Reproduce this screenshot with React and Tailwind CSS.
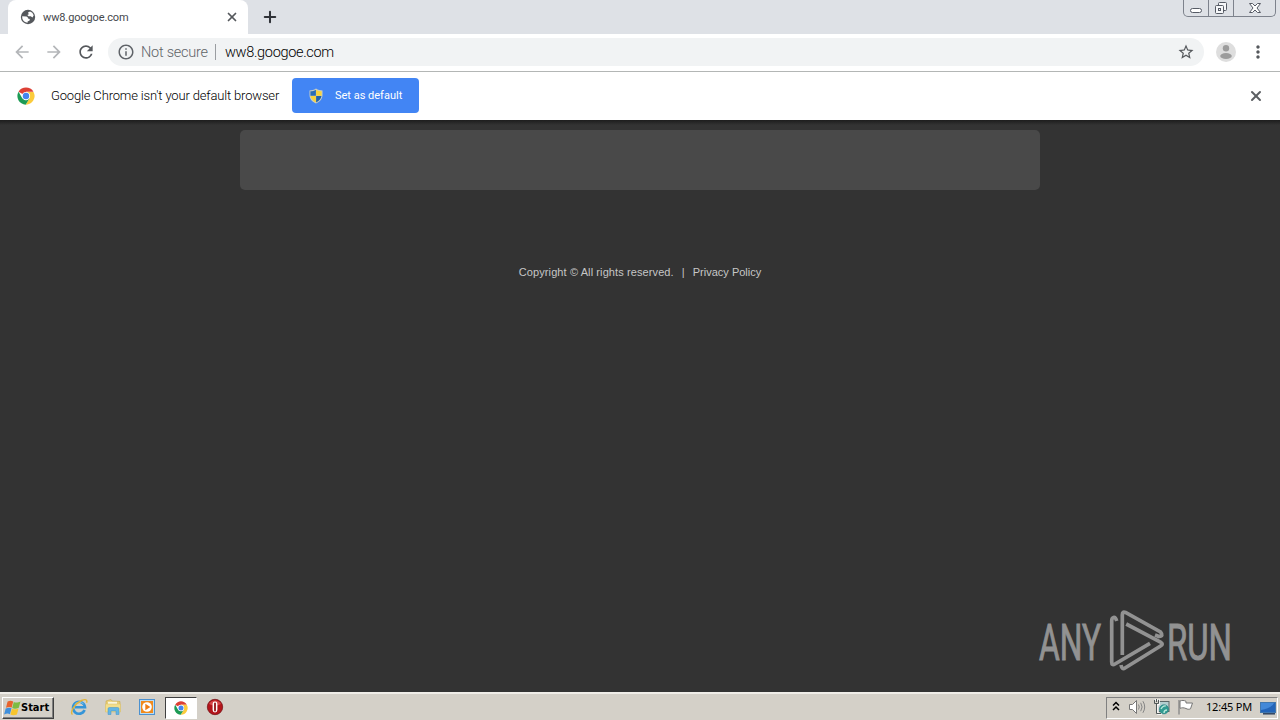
import { X, Plus } from "lucide-react";
import {
  MdArrowBack,
  MdArrowForward,
  MdInfoOutline,
  MdMoreVert,
  MdRefresh,
  MdStarBorder,
} from "react-icons/md";

const GlobeIcon = () => (
  <svg viewBox="0 0 16 16" className="h-4 w-4">
    <circle cx="8" cy="8" r="7.200" fill="#55585c" />
    <path d="M2.200 7.200 6.500 7.600q1.600.4 1.500 2l1.800.3-.2 1.500-2 1.200v1.200Q3.500 13.300 2.300 9.500Z" fill="#fff" />
    <path d="M8 3.600 10 2.500q2.800.9 3.700 3.700L12.500 8.500 10.700 7.300H8.500L7.300 6l1.500-.8Z" fill="#fff" />
  </svg>
);

const ChromeLogo = ({ className }) => (
  <svg viewBox="0 0 48 48" className={className}>
    <circle cx="24" cy="24" r="23" fill="#fff" />
    <path d="M24 24 4.100 12.500A23 23 0 0 1 43.900 12.500H24Z" fill="#dd4035" />
    <path d="M24 13H44A23 23 0 0 1 23 47L34 29Z" fill="#fbcb3c" />
    <path d="M4.100 12.500 14 30 24 35.500 34 29 23 47A23 23 0 0 1 4.100 12.500Z" fill="#1d9b55" />
    <circle cx="24" cy="24" r="11" fill="#fff" />
    <circle cx="24" cy="24" r="8.600" fill="#4485ee" />
  </svg>
);

const ShieldIcon = () => (
  <svg viewBox="0 0 16 16" className="h-4 w-4">
    <path d="M8 .5C6 2 3.500 2.400 1.500 2.400V7c0 4 2.800 7 6.500 8.500C11.700 14 14.500 11 14.500 7V2.400C12.500 2.400 10 2 8 .5Z" fill="#c9cfc4" />
    <path d="M7.900 1.800v6H2.400V3.300C4.600 3.300 6 3 7.900 1.800Z" fill="#2a6db5" />
    <path d="M8.100 1.800v6h5.500V3.300C11.400 3.300 10 3 8.100 1.800Z" fill="#f7d33c" />
    <path d="M2.500 8h5.400v6.500C5 13 3 11 2.500 8Z" fill="#f7d33c" />
    <path d="M13.500 8H8.100v6.500C11 13 13 11 13.500 8Z" fill="#2362a8" />
  </svg>
);

const WindowsFlag = () => (
  <svg viewBox="0 0 17 16" className="h-4 w-[17px] shrink-0">
    <path d="M3.600 1.500C6 .2 7.500.5 9.200 1.500L7.700 7.500C5.800 6.800 4.500 6.700 2 7.800Z" fill="#e8632c" />
    <path d="M9.800 1.900C11.600 2.900 13.500 2.900 16.500 1.500L14.800 7.700C12.300 8.900 10 8.900 8.200 8Z" fill="#7dbb42" />
    <path d="M1.700 8.600C4.200 7.500 5.800 7.500 7.500 8.200L5.900 14.200C4.300 13.300 2.600 13.300.1 14.500Z" fill="#3f8fdc" />
    <path d="M8 8.700C9.800 9.600 11.900 9.600 14.500 8.500L12.900 14.500C10.500 15.600 8.200 15.500 6.400 14.600Z" fill="#f8c52c" />
  </svg>
);

const ExplorerIcon = () => (
  <svg viewBox="0 0 18 18" className="h-[18px] w-[18px]">
    <path d="M14.600 12A6 6 0 1 1 15 9.200H5" fill="none" stroke="#3595d8" strokeWidth="2.600" />
    <path d="M4.500 6.800A6 6 0 0 1 13.500 5.800" fill="none" stroke="#7cc8f4" strokeWidth="1" />
    <path d="M2.500 16.500C-.5 14 5 5.500 11.500 2.500 15.500.8 17.600 1.500 16.600 4.800" fill="none" stroke="#e3b53a" strokeWidth="1.400" />
  </svg>
);

const FolderIcon = () => (
  <svg viewBox="0 0 18 18" className="h-[18px] w-[18px]">
    <path d="M2 3 7 1.500l1 1.500 8 .5v10H2Z" fill="#e9cf78" stroke="#c9a94e" strokeWidth=".6" />
    <path d="M4 3.800h9v3H4Z" fill="#fbf6dc" />
    <path d="M1.500 6h15V14h-15Z" fill="#f3de8c" stroke="#d7bd66" strokeWidth=".5" />
    <path d="M4 16.500v-5.500c0-1 .5-1.500 1.500-1.500h8c1 0 1.500.5 1.500 1.500v5.500h-3v-3.500h-5v3.500Z" fill="#64b5e4" stroke="#4192c6" strokeWidth=".5" />
  </svg>
);

const MediaIcon = () => (
  <svg viewBox="0 0 18 18" className="h-[18px] w-[18px]">
    <rect x="1.500" y="1.500" width="15" height="15" fill="#b9dcf5" stroke="#4b91d0" />
    <rect x="3" y="3" width="12" height="12" fill="#f08a1d" />
    <circle cx="9" cy="9" r="4.800" fill="#fff" />
    <path d="M7.300 5.700v6.600L12.400 9Z" fill="#ee7d16" />
  </svg>
);

const OperaIcon = () => (
  <svg viewBox="0 0 18 18" className="h-[18px] w-[18px]">
    <circle cx="9" cy="9" r="7.700" fill="#b3151b" stroke="#6e0d11" strokeWidth=".7" />
    <path d="M3 6A7 7 0 0 1 15 6Q9 9 3 6Z" fill="#d6484b" />
    <rect x="6.600" y="3.500" width="4.800" height="11" rx="2.400" fill="#fff" />
    <rect x="8.100" y="4.500" width="1.800" height="9" rx=".9" fill="#8f1015" />
  </svg>
);

const SpeakerIcon = () => (
  <svg viewBox="0 0 18 16" className="h-4 w-[18px]" fill="none">
    <path d="M1.500 5.500h3L8.500 1.500v13L4.500 10.500h-3Z" fill="#fff" stroke="#777" />
    <path d="M10.500 5.500q1.500 2.500 0 5M12.700 3.800q2.800 4.200 0 8.400M14.900 2.200q3.600 5.800 0 11.600" stroke="#858585" />
  </svg>
);

const NetworkIcon = () => (
  <svg viewBox="0 0 17 16" className="h-4 w-[17px]">
    <rect x="5.500" y="2.500" width="10.500" height="10" fill="#b5cfd0" stroke="#5c6868" />
    <path d="M1 1h5v4.500H5v9.500h4" fill="none" stroke="#fff" strokeWidth="1.500" />
    <path d="M1.500.8V4.500h4V.8M3.500 0v3M3.500 4.500v10H8" fill="none" stroke="#505757" />
    <circle cx="11" cy="10.300" r="4.600" fill="#319b91" stroke="#267e81" strokeWidth=".6" />
    <path d="M8 10q2-4 5-3M11 14q0-3 3-3" fill="none" stroke="#b9e7da" strokeWidth="1.300" />
  </svg>
);

const FlagIcon = () => (
  <svg viewBox="0 0 17 16" className="h-4 w-[17px]">
    <path d="M2 1v14.500" stroke="#8a8a8a" strokeWidth="1.400" />
    <path d="M3 2c2-.8 4-.8 6 .3v1.700h6.500l-2 5.800c-1.500.7-3 .6-4.500-.3C6.500 8.500 5 8.600 3 9.300Z" fill="#fff" stroke="#777" />
  </svg>
);

const DesktopIcon = () => (
  <svg viewBox="0 0 16 14" className="h-[14px] w-4">
    <rect x=".5" y="1.500" width="15" height="10" fill="#2364b8" stroke="#4177ae" />
    <path d="M1 2h13Q12 7 1 9Z" fill="#4288d8" />
    <path d="M3 12.800h12" stroke="#243a59" strokeWidth="1.400" />
  </svg>
);

const TabStrip = () => (
  <div className="relative flex h-[34px] bg-[#dee1e6]">
    <div className="ml-2 flex h-full w-60 items-center rounded-t-lg bg-white pl-3">
      <GlobeIcon />
      <span className="ml-[7px] w-[182px] whitespace-nowrap pt-[2px] text-[11px] font-normal tracking-[-0.12px] text-[#45484c]">
        ww8.googoe.com
      </span>
      <X className="h-3.5 w-3.5 text-[#55585c]" strokeWidth={3} />
    </div>
    <div className="flex w-11 items-center justify-center">
      <Plus className="h-[18px] w-[18px] text-[#303338]" strokeWidth={2.7} />
    </div>
    {/* Window controls */}
    <div className="absolute right-[4px] top-0 flex h-[17px] w-[93px] rounded-b-[5px] border border-t-0 border-[#7d828c]">
      <div className="flex w-[25px] items-end justify-center border-r border-[#7d828c] pb-[3px]">
        <div className="h-[5px] w-3 rounded-sm border border-[#565b65] bg-white" />
      </div>
      <div className="flex w-[25px] items-center justify-center border-r border-[#7d828c]">
        <svg viewBox="0 0 14 14" className="h-[14px] w-[14px]" fill="#f6f7f9" stroke="#565b65">
          <rect x="4.500" y="1.500" width="8" height="8" rx="1" />
          <rect x="1.500" y="4.500" width="8" height="8" rx="1" />
          <rect x="4.500" y="7.500" width="2" height="2" />
        </svg>
      </div>
      <div className="flex flex-1 items-center justify-center">
        <svg viewBox="0 0 12 10" className="h-[10px] w-3">
          <path d="M.5.500h3L6 3 8.500.500h3L8 5l3.500 4.500h-3L6 7 3.500 9.500h-3L4 5Z" fill="#fff" stroke="#565b65" />
        </svg>
      </div>
    </div>
  </div>
);

const Toolbar = () => (
  <div className="flex h-[38px] items-center border-b border-[#b3b6b5] bg-white pb-px pl-3">
    <MdArrowBack className="h-5 w-5 text-[#b4b6b9]" />
    <MdArrowForward className="ml-3 h-5 w-5 text-[#b4b6b9]" />
    <MdRefresh className="ml-3 h-5 w-5 text-[#55585c]" />
    <div className="ml-3 flex h-7 w-[1096px] items-center rounded-full bg-[#f1f3f4] pl-[9px]">
      <MdInfoOutline className="h-[18px] w-[18px] text-[#5f6368]" />
      <span className="ml-[6px] w-[74px] whitespace-nowrap pt-px text-[14.5px] tracking-[-0.25px] text-[#5f6368]">
        Not secure
      </span>
      <div className="h-4 w-px bg-[#9a9da1]" />
      <span className="ml-[9px] flex-1 whitespace-nowrap pt-px text-[14.5px] tracking-[-0.32px] text-black">
        ww8.googoe.com
      </span>
      <MdStarBorder className="mr-[9px] h-[18px] w-[18px] text-[#55585c]" />
    </div>
    <div className="ml-3 h-5 w-5">
      <svg viewBox="0 0 20 20" className="h-5 w-5">
        <circle cx="10" cy="10" r="10" fill="#dedede" />
        <circle cx="10" cy="6.300" r="3.200" fill="#9c9c9c" />
        <ellipse cx="10" cy="14" rx="5.800" ry="3" fill="#9c9c9c" />
      </svg>
    </div>
    <MdMoreVert className="ml-3 h-5 w-5 text-[#55585c]" />
  </div>
);

const InfoBar = () => (
  <div className="flex h-12 items-center bg-white pb-px pl-[17px]">
    <ChromeLogo className="h-[18px] w-[18px]" />
    <span className="ml-4 w-[241px] whitespace-nowrap text-[13px] tracking-[-0.16px] text-black">
      Google Chrome isn't your default browser
    </span>
    <button className="flex h-[35px] w-[127px] items-center rounded bg-[#4285f4] pl-4 text-white">
      <ShieldIcon />
      <span className="ml-[11px] whitespace-nowrap pt-[2px] text-[11px] font-normal">Set as default</span>
    </button>
    <X className="ml-auto mr-4 h-4 w-4 text-[#5c5f63]" strokeWidth={3} />
  </div>
);

const AnyRunLogo = () => (
  <svg
    viewBox="0 0 206 64"
    className="absolute bottom-[19px] right-[36px] h-16 w-[206px] overflow-visible font-normal"
    fill="none"
    stroke="#929292"
  >
    <text x="1" y="50.500" fill="#929292" strokeWidth="1" fontFamily="Roboto, sans-serif" fontSize="50" textLength="62" lengthAdjust="spacingAndGlyphs">
      ANY
    </text>
    <path d="M78.700 12Q77.500 8 75.500 8.500 73.700 9 73.700 12V53Q73.700 57 77 55L112 34.300" strokeWidth="3.700" />
    <path d="M84.300 46V6Q84.300 2 87.500 3.500L122.500 23Q126 27 121 27.500L117 26" strokeWidth="3.700" />
    <path d="M88.200 15 122.500 33Q126 35 122.500 37L87 59Q84 61 83 56" strokeWidth="3.700" />
    <text x="129" y="50.500" fill="#929292" strokeWidth="1" fontFamily="Roboto, sans-serif" fontSize="50" textLength="65" lengthAdjust="spacingAndGlyphs">
      RUN
    </text>
  </svg>
);

const Page = () => (
  <main className="relative h-[572px] bg-[#333] bg-gradient-to-b from-[#1d1d1d] to-[#333] to-[5px] pt-[10px]">
    <div className="mx-auto h-[60px] w-[800px] rounded-[5px] bg-[#494949]" />
    <div className="mt-[74px] flex justify-center font-['Liberation_Sans',sans-serif] text-[11px] font-normal leading-4 text-[#c6c6c6]">
      <span className="w-[163px] whitespace-nowrap tracking-[0.1px]">Copyright © All rights reserved.</span>
      <span className="w-[11px]">|</span>
      <span className="whitespace-nowrap">Privacy Policy</span>
    </div>
    <AnyRunLogo />
  </main>
);

const quickLaunch = [
  { id: "ie", icon: <ExplorerIcon /> },
  { id: "files", icon: <FolderIcon /> },
  { id: "media", icon: <MediaIcon /> },
  { id: "chrome", icon: <ChromeLogo className="h-[14px] w-[14px]" />, active: true },
  { id: "opera", icon: <OperaIcon /> },
];

const Taskbar = () => (
  <footer className="flex h-7 items-center border-t-2 border-[#efede8] bg-[#d4d0c8] pt-px">
    <button className="ml-[2px] flex h-[22px] w-[52px] items-center border border-b-[#404040] border-l-white border-r-[#404040] border-t-white pl-px shadow-[inset_-1px_-1px_0_#808080]">
      <WindowsFlag />
      <span className="pt-px font-['DejaVu_Sans_Condensed','DejaVu_Sans',sans-serif] text-[11px] font-bold text-black">
        Start
      </span>
    </button>
    <div className="ml-2 flex">
      {quickLaunch.map((item) => (
        <div
          key={item.id}
          className={`flex h-[22px] items-center justify-center ${
            item.active
              ? "mx-px w-[32px] border border-b-white border-l-[#404040] border-r-white border-t-[#404040] bg-white"
              : "w-[34px] pb-px"
          }`}
        >
          {item.icon}
        </div>
      ))}
    </div>
    <div className="ml-auto mr-[2px] flex h-[22px] w-[172px] items-center border border-b-white border-l-[#808080] border-r-white border-t-[#808080]">
      <svg viewBox="0 0 8 10" className="mb-[3px] ml-[5px] h-[10px] w-2" fill="none" stroke="#000" strokeWidth="1.500">
        <path d="m1 4.500 3-3 3 3M1 9l3-3 3 3" />
      </svg>
      <div className="mb-px ml-2 flex gap-[7px]">
        <SpeakerIcon />
        <NetworkIcon />
        <FlagIcon />
      </div>
      <span className="ml-[12px] w-[54px] whitespace-nowrap font-['Noto_Sans',sans-serif] text-[11px] font-normal tracking-[-0.2px] text-black">
        12:45 PM
      </span>
      <DesktopIcon />
    </div>
  </footer>
);

const App = () => (
  <div className="h-[720px] w-[1280px] overflow-hidden font-['Roboto',sans-serif] font-light">
    <TabStrip />
    <Toolbar />
    <InfoBar />
    <Page />
    <Taskbar />
  </div>
);

export default App;
